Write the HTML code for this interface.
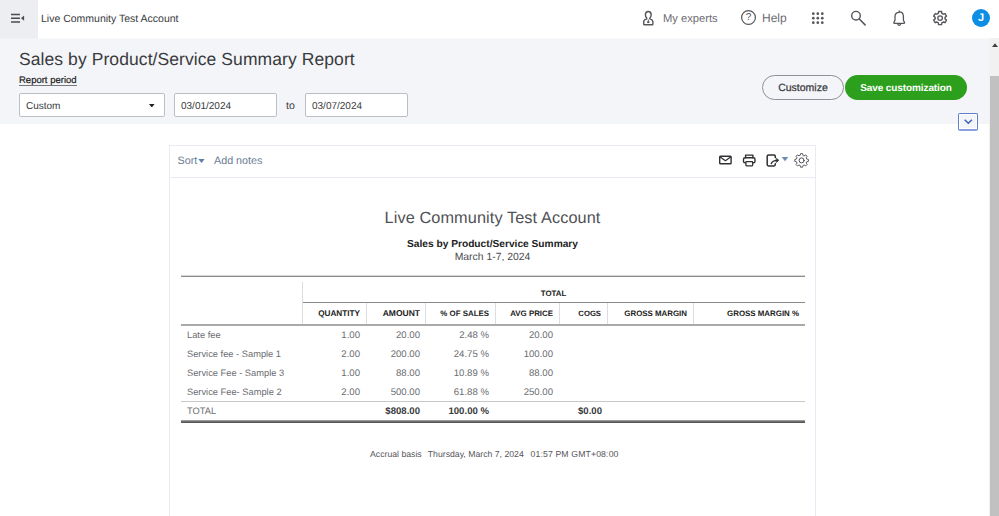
<!DOCTYPE html>
<html><head><meta charset="utf-8">
<style>
*{box-sizing:border-box;margin:0;padding:0}
html,body{text-rendering:geometricPrecision;-webkit-font-smoothing:antialiased;width:999px;height:516px;overflow:hidden;background:#fff;font-family:"Liberation Sans",sans-serif;color:#393a3d}
.abs{position:absolute}
#top{position:absolute;left:0;top:0;width:999px;height:38px;background:#fff}
#ham{position:absolute;left:0;top:0;width:38px;height:38px;background:#eceef1}
#acct{position:absolute;left:41px;top:13px;font-size:10.5px;color:#393a3d;white-space:nowrap}
#band{position:absolute;left:0;top:38px;width:990px;height:86px;background:#f4f5f8}
#title{position:absolute;left:19px;top:48.5px;font-size:17.5px;color:#393a3d;white-space:nowrap;letter-spacing:0.08px}
#rp{-webkit-text-stroke:0.2px #222;position:absolute;left:19px;top:77px;font-size:9.5px;color:#222;border-bottom:1px solid #77787e;line-height:8px;white-space:nowrap}
.inp{position:absolute;top:93px;height:24px;background:#fff;border:1px solid #babec5;border-radius:2px;font-size:10px;line-height:26px;padding-left:6px;color:#393a3d}
#sb{position:absolute;left:989px;top:38px;width:10px;height:478px;background:#f1f1f1}
#sbt{position:absolute;left:990px;top:76px;width:9px;height:440px;background:#c1c1c1}
.btn{position:absolute;top:75px;height:25px;border-radius:13px;font-size:10.5px;line-height:25px;text-align:center;white-space:nowrap}
#panel{position:absolute;left:169px;top:145px;width:647px;height:371px;border:1px solid #e8ebf3;border-bottom:none;background:#fff}
#tb{position:absolute;left:0;top:0;width:645px;height:32px;border-bottom:1px solid #e8ebf3}
.tl{position:absolute;top:7px;font-size:10.75px;color:#6b7c96;white-space:nowrap}
.c{position:absolute;white-space:nowrap}
.h{position:absolute;top:309px;font-size:7.9px;font-weight:bold;color:#222;white-space:nowrap;text-align:right}
.r{position:absolute;font-size:9.6px;color:#6b6c72;white-space:nowrap;text-align:right}
.f{top:448.800px;font-size:8.700px;color:#55565b}
.l{position:absolute;font-size:9.3px;color:#6b6c72;white-space:nowrap;left:187px}
</style></head><body>
<div id="top"></div>
<div id="ham"></div>
<svg class="abs" style="left:10px;top:12px" width="16" height="14" viewBox="0 0 16 14"><path d="M1 2.500h9M1 6.200h9M1 9.900h9" stroke="#4a4b50" stroke-width="1.500" fill="none"/><path d="M14.100 3.600v5.200l-3.100-2.600z" fill="#4a4b50"/></svg>
<div id="acct">Live Community Test Account</div>

<!-- top right icons -->
<svg class="abs" style="left:0;top:0;z-index:5" width="999" height="40" viewBox="0 0 999 40" fill="none" stroke="#55565b" stroke-linejoin="round" stroke-linecap="round">
<path stroke-width="1.400" d="M648.300 11.500c-1.800 0-2.900 1.400-2.900 3.300 0 1.400.6 2.500 1.300 3.200.3.500.1.900-.4 1.100-1.500.5-2.600 1.100-2.600 2.700v2.200c0 .5.300.8.800.8h7.600c.5 0 .8-.3.800-.8v-2.200c0-1.600-1.100-2.200-2.600-2.700-.5-.2-.7-.6-.4-1.100.7-.7 1.300-1.800 1.300-3.200 0-1.900-1.100-3.300-2.900-3.300z"/>
<path stroke-width="1" d="M648.300 20v2.300M647.500 22.200l.8.900.8-.9z" fill="#55565b"/>
<circle cx="748.500" cy="17.500" r="6.900" stroke-width="1.200"/>
<g fill="#55565b" stroke="none"><circle cx="813.300" cy="13.700" r="1.350"/><circle cx="817.800" cy="13.700" r="1.350"/><circle cx="822.300" cy="13.700" r="1.350"/><circle cx="813.300" cy="18.200" r="1.350"/><circle cx="817.800" cy="18.200" r="1.350"/><circle cx="822.300" cy="18.200" r="1.350"/><circle cx="813.300" cy="22.700" r="1.350"/><circle cx="817.800" cy="22.700" r="1.350"/><circle cx="822.300" cy="22.700" r="1.350"/></g>
<circle cx="856" cy="15.700" r="4.300" stroke-width="1.400"/><path stroke-width="1.500" d="M859.300 19l5.800 5.900"/>
<path stroke-width="1.300" d="M899.200 10.900v1.300M899.200 12.300c-2.600 0-4.200 1.800-4.200 4.400v3.100c0 1-.4 1.700-1 2.400-.4.500-.2 1.100.5 1.100h9.400c.7 0 .9-.6.500-1.100-.6-.7-1-1.400-1-2.400v-3.300c0-2.700-1.600-4.600-4.200-4.600zM897.800 24.100c.2.900.7 1.300 1.400 1.300s1.200-.4 1.400-1.300"/>
<path stroke-width="1.400" d="M941.89 13.43 L941.61 11.57 L938.59 11.57 L938.31 13.43 L936.95 14.21 L935.20 13.53 L933.69 16.14 L935.16 17.32 L935.16 18.88 L933.69 20.06 L935.20 22.67 L936.95 21.99 L938.31 22.77 L938.59 24.63 L941.61 24.63 L941.89 22.77 L943.25 21.99 L945.00 22.67 L946.51 20.06 L945.04 18.88 L945.04 17.32 L946.51 16.14 L945.00 13.53 L943.25 14.21Z"/><circle cx="940.100" cy="18.100" r="2.300" stroke-width="1.300"/>
</svg>
<div class="c" style="left:741.500px;top:11.500px;width:14px;text-align:center;font-size:10px;line-height:12px;color:#55565b;z-index:6">?</div>
<div class="abs" style="left:972px;top:9px;width:18px;height:18px;border-radius:50%;background:#0d8de3;color:#fff;font-size:11px;font-weight:bold;text-align:center;line-height:18.500px;z-index:6">J</div>
<div class="c" style="left:663px;top:13px;font-size:11.200px;color:#6b6c72;z-index:6">My experts</div>
<div class="c" style="left:762px;top:10.500px;font-size:12px;color:#6b6c72;z-index:6">Help</div>

<div id="band"></div><div class="abs" style="left:0;top:38px;width:999px;height:1px;background:#f9fafb"></div><div class="abs" style="left:0;top:38px;width:38px;height:1px;background:#f0f1f4"></div>
<div id="sb"></div><div id="sbt"></div>
<svg class="abs" style="left:992px;top:42.800px" width="6" height="4" viewBox="0 0 6 4"><path d="M0 4L3 0.300 6 4z" fill="#404040"/></svg>
<div id="title">Sales by Product/Service Summary Report</div>
<div id="rp">Report period</div>
<div class="inp" style="left:19px;width:146px">Custom</div>
<svg class="abs" style="left:149.200px;top:103.500px" width="5.600" height="3.600" viewBox="0 0 7 4.500"><path d="M0 0h7L3.500 4.500z" fill="#222"/></svg>
<div class="inp" style="left:174px;width:103px">03/01/2024</div>
<div class="c" style="left:286px;top:99.5px;font-size:10.5px;color:#393a3d">to</div>
<div class="inp" style="left:305px;width:103px">03/07/2024</div>

<div class="btn" style="left:762px;width:82px;border:1px solid #8d9096;background:#f4f5f8;color:#393a3d;-webkit-text-stroke:0.25px #393a3d">Customize</div>
<div class="btn" style="left:845px;width:122px;background:#2ca01c;color:#fff;font-weight:bold;line-height:27px;font-size:10px;letter-spacing:-0.1px">Save customization</div>
<div class="abs" style="left:958px;top:113px;width:20px;height:18px;border:1px solid #5f7fd0;border-bottom:2px solid #8aa0dc;border-radius:2px;background:#f4f5f8;box-shadow:inset 0 0 0 1px #fff"></div>
<svg class="abs" style="left:963px;top:118px" width="11" height="8" viewBox="0 0 11 8"><path d="M1.700 1.700l3.600 3.600 3.600-3.600" fill="none" stroke="#3f5fb8" stroke-width="1.500"/></svg>

<div id="panel"><div id="tb"></div></div>
<div class="tl" style="left:177.500px;top:154.500px">Sort</div>
<svg class="abs" style="left:198px;top:159px" width="7" height="4" viewBox="0 0 7 4"><path d="M0.300 0h6.400L3.500 4z" fill="#5f80a8"/></svg>
<div class="tl" style="left:214px;top:154.500px">Add notes</div>

<!-- toolbar icons -->
<svg class="abs" style="left:700px;top:146px;z-index:5" width="115" height="31" viewBox="700 146 115 31" fill="none" stroke="#2f3034" stroke-linejoin="round" stroke-linecap="round">
<rect x="719.700" y="156.200" width="11.400" height="7.500" rx="0.800" stroke-width="1.400"/><path stroke-width="1.200" d="M720.200 157l5.200 3.700 5.200-3.700"/>
<path stroke-width="1.400" d="M745.600 157.700v-2.600h7.300v2.600"/>
<rect x="743.500" y="157.800" width="11.500" height="5" rx="1.600" stroke-width="1.400"/>
<rect x="745.900" y="161.600" width="6.700" height="4.200" rx="0.500" fill="#fff" stroke-width="1.300"/>
<path stroke-width="1.500" d="M775.300 157.600v-1.400c0-.8-.5-1.300-1.300-1.300h-5.500c-.8 0-1.300.5-1.300 1.300v8.400c0 .8.500 1.300 1.300 1.300h5.500c.8 0 1.300-.5 1.300-1.300v-.8"/>
<path stroke-width="1.300" d="M771.200 163.700c.6-2 2.600-3.300 6.400-3.400"/><path d="M776.400 158.300l2.500 2-2.500 2.100z" fill="#2f3034" stroke-width="0.600"/>
<path d="M781.700 157h6.600l-3.300 4.200z" fill="#6d8db2" stroke="none"/>
<path stroke-width="0.900" stroke="#4a4b50" d="M802.97 155.28 L802.56 153.57 L800.64 153.57 L800.23 155.28 L798.95 155.81 L797.45 154.89 L796.09 156.25 L797.01 157.75 L796.48 159.03 L794.77 159.44 L794.77 161.36 L796.48 161.77 L797.01 163.05 L796.09 164.55 L797.45 165.91 L798.95 164.99 L800.23 165.52 L800.64 167.23 L802.56 167.23 L802.97 165.52 L804.25 164.99 L805.75 165.91 L807.11 164.55 L806.19 163.05 L806.72 161.77 L808.43 161.36 L808.43 159.44 L806.72 159.03 L806.19 157.75 L807.11 156.25 L805.75 154.89 L804.25 155.81Z"/><circle cx="801.600" cy="160.400" r="2.500" stroke="#4a4b50" stroke-width="1"/>
</svg>

<!-- report header -->
<div class="c" style="left:169px;width:647px;top:208.5px;text-align:center;letter-spacing:0.1px;font-size:16.3px;color:#505156">Live Community Test Account</div>
<div class="c" style="left:169px;width:647px;top:238.5px;text-align:center;font-size:10.2px;font-weight:bold;color:#222">Sales by Product/Service Summary</div>
<div class="c" style="left:169px;width:647px;top:252.3px;text-align:center;font-size:10.4px;color:#4a4b50">March 1-7, 2024</div>

<!-- table lines -->
<div class="abs" style="left:181px;top:275px;width:624px;height:1px;background:#d6d6d6"></div><div class="abs" style="left:181px;top:276px;width:624px;height:1px;background:#8c8c8c"></div>
<div class="abs" style="left:302px;top:302px;width:503px;height:1px;background:#8a8a8a"></div>
<div class="abs" style="left:181px;top:324px;width:624px;height:2px;background:#a9a9a9"></div>
<div class="abs" style="left:181px;top:401px;width:624px;height:1px;background:#c8c8c8"></div>
<div class="abs" style="left:181px;top:420px;width:624px;height:1px;background:#9a9a9a"></div><div class="abs" style="left:181px;top:421px;width:624px;height:1px;background:#707070"></div><div class="abs" style="left:181px;top:422px;width:624px;height:1px;background:#555"></div>
<div class="abs" style="left:302px;top:282px;width:1px;height:42px;background:#dcdde0"></div>
<div class="abs" style="left:366px;top:303px;width:1px;height:21px;background:#dcdde0"></div>
<div class="abs" style="left:425px;top:303px;width:1px;height:21px;background:#dcdde0"></div>
<div class="abs" style="left:495px;top:303px;width:1px;height:21px;background:#dcdde0"></div>
<div class="abs" style="left:559px;top:303px;width:1px;height:21px;background:#dcdde0"></div>
<div class="abs" style="left:607px;top:303px;width:1px;height:21px;background:#dcdde0"></div>
<div class="abs" style="left:693px;top:303px;width:1px;height:21px;background:#dcdde0"></div>

<div class="h" style="left:302px;width:503px;top:289px;text-align:center">TOTAL</div>
<div class="h" style="right:639px;font-size:8.2px">QUANTITY</div>
<div class="h" style="right:579px;top:308px;font-size:8.5px">AMOUNT</div>
<div class="h" style="right:510px;">% OF SALES</div>
<div class="h" style="right:446px;">AVG PRICE</div>
<div class="h" style="right:398px;font-size:7.7px">COGS</div>
<div class="h" style="right:312px;">GROSS MARGIN</div>
<div class="h" style="right:200px;">GROSS MARGIN %</div>

<div class="l" style="top:329.8px">Late fee</div>
<div class="r" style="right:639px;top:329.8px">1.00</div><div class="r" style="right:579px;top:329.8px">20.00</div><div class="r" style="right:510px;top:329.8px">2.48 %</div><div class="r" style="right:446px;top:329.8px">20.00</div>
<div class="l" style="top:348.8px">Service fee - Sample 1</div>
<div class="r" style="right:639px;top:348.8px">2.00</div><div class="r" style="right:579px;top:348.8px">200.00</div><div class="r" style="right:510px;top:348.8px">24.75 %</div><div class="r" style="right:446px;top:348.8px">100.00</div>
<div class="l" style="top:367.8px">Service Fee - Sample 3</div>
<div class="r" style="right:639px;top:367.8px">1.00</div><div class="r" style="right:579px;top:367.8px">88.00</div><div class="r" style="right:510px;top:367.8px">10.89 %</div><div class="r" style="right:446px;top:367.8px">88.00</div>
<div class="l" style="top:386.8px">Service Fee- Sample 2</div>
<div class="r" style="right:639px;top:386.8px">2.00</div><div class="r" style="right:579px;top:386.8px">500.00</div><div class="r" style="right:510px;top:386.8px">61.88 %</div><div class="r" style="right:446px;top:386.8px">250.00</div>
<div class="l" style="top:405.8px">TOTAL</div>
<div class="r" style="right:579px;top:405.8px;font-weight:bold;color:#393a3d">$808.00</div><div class="r" style="right:510px;top:405.8px;font-weight:bold;color:#393a3d">100.00 %</div><div class="r" style="right:397px;top:405.8px;font-weight:bold;color:#393a3d">$0.00</div>

<div class="c f" style="left:370px">Accrual basis</div><div class="c f" style="left:427.800px">Thursday, March 7, 2024</div><div class="c f" style="left:530.500px;letter-spacing:0.130px">01:57 PM GMT+08:00</div>
</body></html>
